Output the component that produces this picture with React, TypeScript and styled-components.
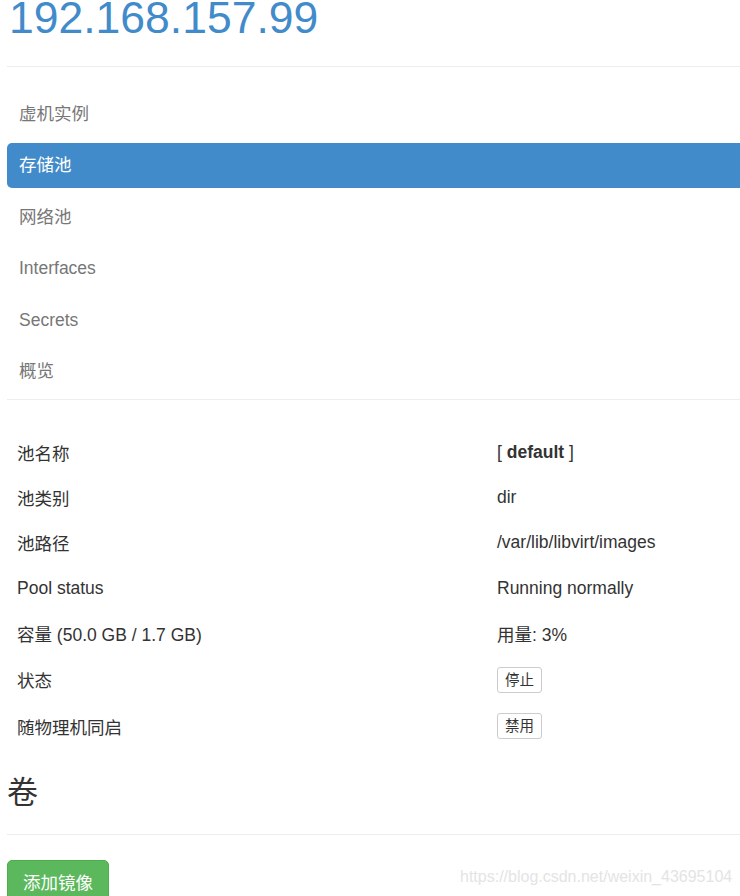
import React from "react";
import styled, { createGlobalStyle } from "styled-components";

const GlobalStyle = createGlobalStyle`
  html, body {
    margin: 0;
    padding: 0;
    background: #fff;
    overflow-x: hidden;
  }
  body {
    font-family: "Liberation Sans", Arial, "Noto Sans CJK SC", sans-serif;
    color: #333;
  }
`;

const Page = styled.div`
  width: 760px;
  padding-left: 7px;
  box-sizing: border-box;
  position: relative;
  height: 896px;
  overflow: hidden;
`;

const HostTitle = styled.h1`
  margin: -4px 0 0 2px;
  font-size: 44.5px;
  line-height: 1;
  font-weight: 400;
  color: #428bca;
`;

const Rule = styled.hr<{ $above: number; $below: number }>`
  border: 0;
  border-top: 1px solid #eee;
  margin: ${({ $above }) => $above}px 0 ${({ $below }) => $below}px;
`;

const Pills = styled.ul`
  list-style: none;
  margin: 0;
  padding: 0 0 5px;
  display: flex;
  flex-direction: column;
  gap: 6.6px;
`;

const Pill = styled.li<{ $active?: boolean }>`
  height: 45px;
  line-height: 45px;
  padding-left: 12px;
  border-radius: 5px;
  font-size: 17.5px;
  color: ${({ $active }) => ($active ? "#fff" : "#777")};
  background: ${({ $active }) => ($active ? "#428bca" : "transparent")};
`;

const InfoTable = styled.div`
  display: grid;
  grid-template-columns: 480px 1fr;
  padding-left: 10px;
`;

const Cell = styled.div<{ $tall?: boolean }>`
  height: ${({ $tall }) => ($tall ? 46.5 : 45.4)}px;
  display: flex;
  align-items: center;
  font-size: 17.5px;
  color: #333;
`;

const SmallButton = styled.button`
  height: 26px;
  padding: 0 7px;
  border: 1px solid #ccc;
  border-radius: 3px;
  background: #fff;
  color: #333;
  font-family: inherit;
  font-size: 14.5px;
  line-height: 24px;
`;

const SectionTitle = styled.h2`
  margin: 24px 0 0;
  font-size: 31px;
  line-height: 40px;
  font-weight: 400;
  color: #333;
`;

const AddButton = styled.button`
  height: 46px;
  padding: 0 15px;
  border: 1px solid #4cae4c;
  border-radius: 5px;
  background: #5cb85c;
  color: #fff;
  font-family: inherit;
  font-size: 17.5px;
  line-height: 40px;
  display: block;
`;

const Watermark = styled.div`
  position: absolute;
  left: 460px;
  top: 868px;
  font-size: 16px;
  color: #e4e4e4;
  white-space: nowrap;
`;

const rows: [string, React.ReactNode, boolean?][] = [
  ["池名称", <span>[ <b>default</b> ]</span>],
  ["池类别", "dir"],
  ["池路径", "/var/lib/libvirt/images"],
  ["Pool status", "Running normally"],
  ["容量 (50.0 GB / 1.7 GB)", "用量: 3%"],
  ["状态", <SmallButton>停止</SmallButton>, true],
  ["随物理机同启", <SmallButton>禁用</SmallButton>, true],
];

export default function App() {
  const nav = ["虚机实例", "存储池", "网络池", "Interfaces", "Secrets", "概览"];
  return (
    <Page>
      <GlobalStyle />
      <HostTitle>192.168.157.99</HostTitle>
      <Rule $above={25} $below={25} />
      <Pills>
        {nav.map((n) => (
          <Pill key={n} $active={n === "存储池"}>
            {n}
          </Pill>
        ))}
      </Pills>
      <Rule $above={0} $below={29} />
      <InfoTable>
        {rows.map(([label, value, tall]) => (
          <React.Fragment key={label}>
            <Cell $tall={tall}>{label}</Cell>
            <Cell $tall={tall}>{value}</Cell>
          </React.Fragment>
        ))}
      </InfoTable>
      <SectionTitle>卷</SectionTitle>
      <Rule $above={21} $below={25} />
      <AddButton>添加镜像</AddButton>
      <Watermark>https://blog.csdn.net/weixin_43695104</Watermark>
    </Page>
  );
}
